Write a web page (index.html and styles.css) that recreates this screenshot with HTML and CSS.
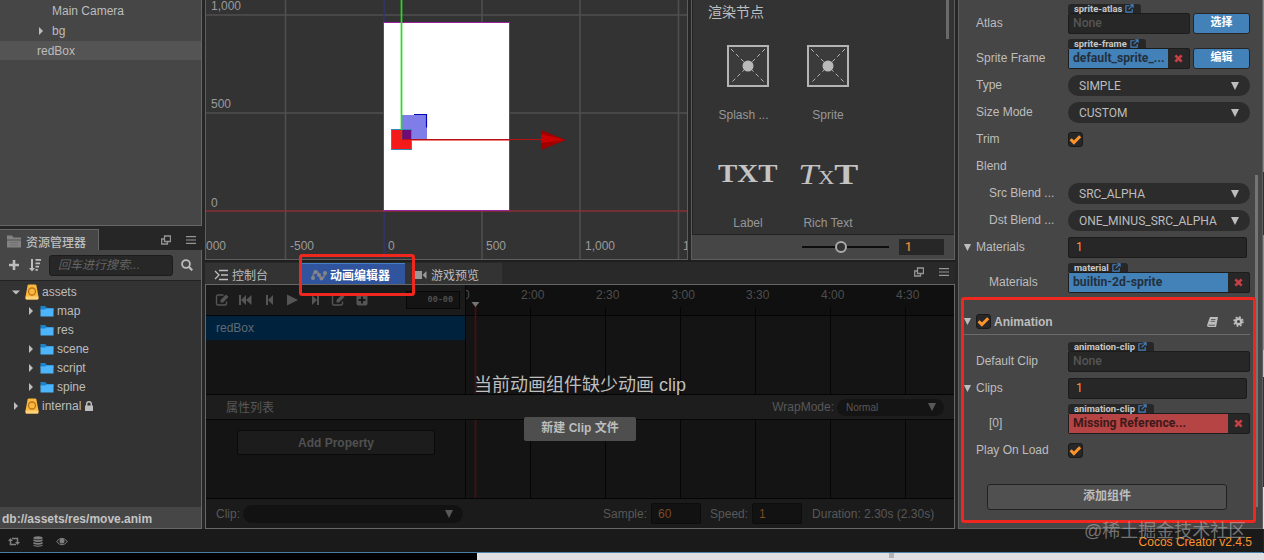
FILE: index.html
```html
<!DOCTYPE html>
<html lang="zh">
<head>
    <meta charset="UTF-8">
    <title>Cocos Creator</title>
    <link rel="stylesheet" href="styles.css">
</head>
<body>
    <svg class="defs">
        <symbol id="i-right" viewBox="0 0 10 10"><path d="M3 1l4 4-4 4z"/></symbol>
        <symbol id="i-down" viewBox="0 0 10 10"><path d="M1 3.400h8L5 7.400z"/></symbol>
        <symbol id="i-caret" viewBox="0 0 10 10"><path d="M1 1h8L5 9z"/></symbol>
        <symbol id="i-db" viewBox="0 0 14 16">
            <path d="M2.600 1.500Q3 .5 4 .5h6q1 0 1.400 1l2 10.500v2.500q0 1-1 1H1.600q-1 0-1-1V12z" fill="#fbb83c"/>
            <path d="M.6 12.500h12.800v2q0 1-1 1H1.600q-1 0-1-1z" fill="#ffd27a"/>
            <circle cx="7" cy="7.500" r="3.500" fill="none" stroke="#b8741c" stroke-width="1.300"/>
        </symbol>
        <symbol id="i-folder" viewBox="0 0 14 12">
            <path d="M.5 1h4.500l2 2h6.500v3H.5z" fill="#1f83c9"/>
            <path d="M.5 4.500h4.500l1.500-1h7V11.500H.5z" fill="#4db5fb"/>
        </symbol>
        <symbol id="i-pop" viewBox="0 0 10 10">
            <path d="M3.500 1h6v5.500h-6zM3 4H.7v5h5.800V7" fill="none" stroke="currentColor" stroke-width="1.300"/>
        </symbol>
        <symbol id="i-menu" viewBox="0 0 10 10"><path d="M0 1h10v1.200H0zM0 4.400h10v1.200H0zM0 7.800h10V9H0z"/></symbol>
        <symbol id="i-edit" viewBox="0 0 14 14">
            <path d="M8.500 2H3Q1.500 2 1.500 3.500v7Q1.500 12 3 12h7q1.500 0 1.500-1.500V8.500" fill="none" stroke="currentColor" stroke-width="1.400"/>
            <path d="M5.500 9.500V7l5.500-5.500 2.500 2.500L8 9.500z"/>
        </symbol>
        <symbol id="i-link" viewBox="0 0 10 10">
            <path d="M5 2H1v7h7V5.500M4 6l4.500-4.500M5.800 1H9v3.200" fill="none" stroke="currentColor" stroke-width="1.200"/>
        </symbol>
        <symbol id="i-check" viewBox="0 0 12 12"><path d="M1.500 5.800l3 3 5.800-5.800" fill="none" stroke="currentColor" stroke-width="2.800"/></symbol>
        <symbol id="i-x" viewBox="0 0 10 10"><path d="M1.500 1.500l7 7M8.500 1.500l-7 7" stroke="currentColor" stroke-width="3"/></symbol>
    </svg>

    <div class="editor">
        <div class="col-left">
            <div class="panel hierarchy">
                <div class="node"><span class="node-arrow"></span><span>Main Camera</span></div>
                <div class="node"><svg class="node-arrow"><use href="#i-right"/></svg><span>bg</span></div>
                <div class="node selected"><span>redBox</span></div>
            </div>
            <div class="assets">
                <div class="tabs">
                    <div class="tab assets-tab">
                        <svg class="ic14" viewBox="0 0 14 13"><path d="M0 1h5l1.500 2H14v10H0z" fill="#828282"/><path d="M0 5.500h14" stroke="#505050"/><path d="M3 8h8M3 10.500h8" stroke="#707070"/></svg>
                        资源管理器
                    </div>
                    <div class="tab-tools">
                        <svg class="ic10"><use href="#i-pop"/></svg>
                        <svg class="ic10"><use href="#i-menu"/></svg>
                    </div>
                </div>
                <div class="assets-body">
                    <div class="search-bar">
                        <svg class="ic-plus" viewBox="0 0 10 10"><path d="M3.700 0h2.600v3.700H10v2.600H6.300V10H3.700V6.300H0V3.700h3.700z"/></svg>
                        <svg class="ic-sort" viewBox="0 0 12 13"><path d="M2 0h2v9h2L3 12.500 0 9h2zM6.500 0H12v1.800H6.500zM6.500 3.400H11v1.800H6.500zM6.500 6.800H10v1.800H6.500zM6.500 10H8.800v1.800H6.500z"/></svg>
                        <div class="search-input">回车进行搜索...</div>
                        <svg class="ic-search" viewBox="0 0 12 12"><circle cx="5" cy="5" r="3.900" fill="none" stroke="currentColor" stroke-width="1.800"/><path d="M8 8l3.300 3.300" stroke="currentColor" stroke-width="2.200"/></svg>
                    </div>
                    <div class="tree">
                        <div class="item root"><svg class="arrow"><use href="#i-down"/></svg><svg class="ic-db"><use href="#i-db"/></svg>assets</div>
                        <div class="item"><svg class="arrow"><use href="#i-right"/></svg><svg class="ic-folder"><use href="#i-folder"/></svg>map</div>
                        <div class="item"><span class="arrow"></span><svg class="ic-folder"><use href="#i-folder"/></svg>res</div>
                        <div class="item"><svg class="arrow"><use href="#i-right"/></svg><svg class="ic-folder"><use href="#i-folder"/></svg>scene</div>
                        <div class="item"><svg class="arrow"><use href="#i-right"/></svg><svg class="ic-folder"><use href="#i-folder"/></svg>script</div>
                        <div class="item"><svg class="arrow"><use href="#i-right"/></svg><svg class="ic-folder"><use href="#i-folder"/></svg>spine</div>
                        <div class="item root"><svg class="arrow"><use href="#i-right"/></svg><svg class="ic-db"><use href="#i-db"/></svg>internal
                            <svg class="ic-lock" viewBox="0 0 8 10"><path d="M0 4.500h8V10H0z"/><path d="M1.700 5V3a2.300 2.300 0 0 1 4.600 0v2" fill="none" stroke="currentColor" stroke-width="1.400"/></svg>
                        </div>
                    </div>
                    <div class="path">db://assets/res/move.anim</div>
                </div>
            </div>
        </div>

        <div class="col-center">
            <div class="center-top">
                <div class="scene">
                    <svg width="481" height="259" viewBox="206 0 481 259">
                        <g stroke="#505050" stroke-width="1.500">
                            <path d="M206 15h481M206 113h481M285.500 0v259M482 0v259M580 0v259M678.500 0v259"/>
                        </g>
                        <path d="M384 0v259" stroke="#34347c" stroke-width="1.300"/>
                        <path d="M206 211h481" stroke="#8a2f32" stroke-width="1.500"/>
                        <rect x="383.500" y="22.500" width="126" height="188" fill="#fff" stroke="#97229c"/>
                        <rect x="402" y="115" width="25" height="25" fill="#7f7ee8"/>
                        <path d="M414 114.500h12.500v13" fill="none" stroke="#0505b8" stroke-width="1.200"/>
                        <rect x="391.500" y="129.500" width="20" height="20" fill="#f51a1a" stroke="#3289b5"/>
                        <rect x="402" y="130" width="9" height="9.500" fill="#700a78"/>
                        <path d="M401.500 0v130" stroke="#1ee01e" stroke-width="1.700"/>
                        <path d="M401.500 130v10" stroke="#8a5a10" stroke-width="1.500"/>
                        <path d="M411 140h98" stroke="#ee4f4f" stroke-width="1.500"/>
                        <path d="M402 139.500h139" stroke="#b31212"/>
                        <path d="M541 130l25 10-25 10z" fill="#a00000"/>
                        <path d="M541 134l24 6-24 3z" fill="#cc0000"/>
                        <g class="ruler-text">
                            <text x="211" y="10">1,000</text>
                            <text x="211" y="108">500</text>
                            <text x="211" y="207">0</text>
                            <text x="206" y="250">000</text>
                            <text x="290" y="250">-500</text>
                            <text x="388" y="250">0</text>
                            <text x="486" y="250">500</text>
                            <text x="585" y="250">1,000</text>
                            <text x="683" y="250">1</text>
                        </g>
                    </svg>
                </div>
                <div class="library">
                    <div class="lib-list">
                        <div class="lib-title">渲染节点</div>
                        <div class="lib-grid">
                            <div class="lib-item">
                                <svg class="sprite-icon" viewBox="0 0 42 42"><rect x="1" y="1" width="40" height="40" fill="#3b3b3b" stroke="#b4b4b4" stroke-width="2"/><path d="M4 4l34 34M38 4L4 38" stroke="#b4b4b4" stroke-dasharray="4 3"/><circle cx="21" cy="21" r="5.500" fill="#b9b9b9"/></svg>
                                <span>Splash ...</span>
                            </div>
                            <div class="lib-item">
                                <svg class="sprite-icon" viewBox="0 0 42 42"><rect x="1" y="1" width="40" height="40" fill="#3b3b3b" stroke="#b4b4b4" stroke-width="2"/><path d="M4 4l34 34M38 4L4 38" stroke="#b4b4b4" stroke-dasharray="4 3"/><circle cx="21" cy="21" r="5.500" fill="#b9b9b9"/></svg>
                                <span>Sprite</span>
                            </div>
                            <div class="lib-item"><div class="txt">TXT</div><span>Label</span></div>
                            <div class="lib-item"><div class="txt rich"><i>T</i><small>X</small><b>T</b></div><span>Rich Text</span></div>
                        </div>
                        <div class="lib-scroll"></div>
                    </div>
                    <div class="lib-footer">
                        <div class="slider"><div class="knob"></div></div>
                        <div class="lib-num">1</div>
                    </div>
                </div>
            </div>

            <div class="anim">
                <div class="tabs">
                    <div class="tab tab-console">
                        <svg class="ic-console" viewBox="0 0 15 12"><path d="M1 2l4 4-4 4" fill="none" stroke="currentColor" stroke-width="1.300"/><path d="M5 1.500h9M7 6h7M5 10.500h9" stroke="currentColor" stroke-width="1.700"/></svg>
                        控制台
                    </div>
                    <div class="tab tab-anim">
                        <svg class="ic-curve" viewBox="0 0 16 12"><path d="M1.500 9.500C3 1 5.500 0 8 6s5 3 6.500-3" fill="none" stroke="#77777a" stroke-width="2"/><g fill="#86868a"><circle cx="2" cy="9" r="2"/><circle cx="4.500" cy="3" r="2"/><circle cx="8" cy="6" r="2"/><circle cx="10.500" cy="9.500" r="2"/><circle cx="14" cy="4" r="2"/></g></svg>
                        动画编辑器
                    </div>
                    <div class="tab tab-preview">
                        <svg class="ic-cam" viewBox="0 0 14 10"><path d="M0 1h9v8H0zM9.500 5L13.500 1v8z" fill="#999"/></svg>
                        游戏预览
                    </div>
                    <div class="tab-tools">
                        <svg class="ic10"><use href="#i-pop"/></svg>
                        <svg class="ic10"><use href="#i-menu"/></svg>
                    </div>
                </div>
                <div class="anim-body">
                    <div class="anim-main">
                        <div class="anim-side">
                            <div class="anim-tools">
                                <svg class="ic14"><use href="#i-edit"/></svg>
                                <svg class="ic14" viewBox="0 0 14 14"><path d="M1 2h2v10H1zM8 2v10L3 7zM13.500 2v10L8 7z"/></svg>
                                <svg class="ic14" viewBox="0 0 14 14"><path d="M4 2h2v10H4zM11 2v10L6 7z"/></svg>
                                <svg class="ic14" viewBox="0 0 14 14"><path d="M2 1.500L13 7 2 12.500z"/></svg>
                                <svg class="ic14" viewBox="0 0 14 14"><path d="M9 2h2v10H9zM4 2v10l5-5z"/></svg>
                                <svg class="ic14"><use href="#i-edit"/></svg>
                                <svg class="ic14" viewBox="0 0 14 14"><path d="M3.500 1.500h7q2 0 2 2v7q0 2-2 2h-7q-2 0-2-2v-7q0-2 2-2z"/><path d="M7 3.500v7M3.500 7h7" stroke="#181818" stroke-width="2"/></svg>
                                <div class="frame-input">00-00</div>
                            </div>
                            <div class="anim-node">redBox</div>
                        </div>
                        <svg class="timeline" width="488" height="109" viewBox="466 285 488 109">
                            <rect x="466" y="285" width="488" height="30" fill="#101010"/>
                            <path d="M466 315.500h488M530.500 307v87M605.500 307v87M680.500 307v87M755.500 307v87M830.500 307v87M905.500 307v87" stroke="#050505"/>
                            <path d="M475.500 305v89" stroke="#5a0808" stroke-width="1.500"/>
                            <path d="M471.500 302h8l-4 5z" fill="#747474"/>
                            <g class="time-text">
                                <text x="463" y="299">0</text>
                                <text x="521" y="299">2:00</text>
                                <text x="596" y="299">2:30</text>
                                <text x="671.500" y="299">3:00</text>
                                <text x="746" y="299">3:30</text>
                                <text x="821" y="299">4:00</text>
                                <text x="896" y="299">4:30</text>
                            </g>
                        </svg>
                    </div>
                    <div class="prop-bar">
                        <span class="prop-title">属性列表</span>
                        <span>WrapMode:</span>
                        <div class="wrap-select">Normal<svg class="ic10"><use href="#i-caret"/></svg></div>
                    </div>
                    <div class="anim-main">
                        <div class="anim-side"><div class="add-prop">Add Property</div></div>
                        <svg class="timeline" width="488" height="78" viewBox="466 420 488 78">
                            <path d="M530.500 420v78M605.500 420v78M680.500 420v78M755.500 420v78M830.500 420v78M905.500 420v78" stroke="#050505"/>
                            <path d="M475.500 420v78" stroke="#5a0808" stroke-width="1.500"/>
                        </svg>
                    </div>
                    <div class="clip-bar">
                        <span>Clip:</span>
                        <div class="clip-select"><svg class="ic10"><use href="#i-caret"/></svg></div>
                        <span class="sample">Sample:</span><div class="num">60</div>
                        <span class="speed">Speed:</span><div class="num">1</div>
                        <span class="duration">Duration: 2.30s (2.30s)</span>
                    </div>
                    <div class="prompt">
                        <div class="prompt-text">当前动画组件缺少动画 clip</div>
                        <div class="prompt-button">新建 Clip 文件</div>
                    </div>
                </div>
            </div>
        </div>

        <div class="inspector">
            <div class="row tagged">
                <label>Atlas</label>
                <div class="field short"><div class="tag">sprite-atlas<svg><use href="#i-link"/></svg></div><div class="box none">None</div></div>
                <div class="blue-button">选择</div>
            </div>
            <div class="row tagged">
                <label>Sprite Frame</label>
                <div class="field short"><div class="tag">sprite-frame<svg><use href="#i-link"/></svg></div><div class="box"><div class="ref">default_sprite_...</div><svg class="del"><use href="#i-x"/></svg></div></div>
                <div class="blue-button">编辑</div>
            </div>
            <div class="row"><label>Type</label><div class="select">SIMPLE<svg class="ic10"><use href="#i-caret"/></svg></div></div>
            <div class="row"><label>Size Mode</label><div class="select">CUSTOM<svg class="ic10"><use href="#i-caret"/></svg></div></div>
            <div class="row"><label>Trim</label><div class="check"><svg><use href="#i-check"/></svg></div></div>
            <div class="row"><label>Blend</label></div>
            <div class="row sub"><label>Src Blend ...</label><div class="select">SRC_ALPHA<svg class="ic10"><use href="#i-caret"/></svg></div></div>
            <div class="row sub"><label>Dst Blend ...</label><div class="select">ONE_MINUS_SRC_ALPHA<svg class="ic10"><use href="#i-caret"/></svg></div></div>
            <div class="row fold"><svg class="fold-icon"><use href="#i-caret"/></svg><label>Materials</label><div class="input">1</div></div>
            <div class="row tagged sub">
                <label>Materials</label>
                <div class="field"><div class="tag">material<svg><use href="#i-link"/></svg></div><div class="box"><div class="ref">builtin-2d-sprite</div><svg class="del"><use href="#i-x"/></svg></div></div>
            </div>
            <div class="comp-header">
                <svg class="fold-icon"><use href="#i-caret"/></svg>
                <div class="check"><svg><use href="#i-check"/></svg></div>
                <span class="comp-name">Animation</span>
                <svg class="ic-book" viewBox="0 0 11 10"><path d="M3 0h8L9 10H1.500Q-.3 9.800.3 7.500z"/><path d="M4 2.500h4.500M3.600 4.300h4.500M1.500 8.200h6.500" stroke="#464646" stroke-width=".8"/></svg>
                <svg class="ic-gear" viewBox="0 0 12 12"><circle cx="6" cy="6" r="3" fill="none" stroke="currentColor" stroke-width="2.600"/><circle cx="6" cy="6" r="4.800" fill="none" stroke="currentColor" stroke-width="1.800" stroke-dasharray="2 1.770"/></svg>
            </div>
            <div class="row tagged">
                <label>Default Clip</label>
                <div class="field"><div class="tag">animation-clip<svg><use href="#i-link"/></svg></div><div class="box none">None</div></div>
            </div>
            <div class="row fold"><svg class="fold-icon"><use href="#i-caret"/></svg><label>Clips</label><div class="input">1</div></div>
            <div class="row tagged sub">
                <label>[0]</label>
                <div class="field"><div class="tag">animation-clip<svg><use href="#i-link"/></svg></div><div class="box"><div class="ref missing">Missing Reference...</div><svg class="del"><use href="#i-x"/></svg></div></div>
            </div>
            <div class="row"><label>Play On Load</label><div class="check"><svg><use href="#i-check"/></svg></div></div>
            <div class="add-comp">添加组件</div>
            <div class="inspector-scroll"></div>
        </div>
        <div class="screen-edge"></div>
    </div>

    <div class="status">
        <svg viewBox="0 0 12 10"><path d="M2.500 4v4H8M9.500 6V2H4" fill="none" stroke="currentColor" stroke-width="1.500"/><path d="M0 4.500l2.500-3 2.500 3zM7 5.500l2.500 3 2.500-3z"/></svg>
        <svg viewBox="0 0 12 12"><ellipse cx="6" cy="2" rx="5" ry="1.800"/><path d="M1 3.500q5 2 10 0v2q-5 2-10 0zM1 6.500q5 2 10 0v2q-5 2-10 0zM1 9.500q5 2 10 0v1q-5 2.500-10 0z"/></svg>
        <svg viewBox="0 0 12 10"><path d="M.6 5Q6-1.500 11.400 5 6 11.500.6 5z" fill="none" stroke="currentColor"/><circle cx="6" cy="4.600" r="2.500"/></svg>
        <span class="version">Cocos Creator v2.4.5</span>
    </div>
    <div class="desktop"><div class="desktop-dark"></div><div class="desktop-mark"></div></div>

    <div class="mark mark-tab"></div>
    <div class="mark mark-comp"></div>
    <div class="watermark">@稀土掘金技术社区</div>
</body>
</html>
```

FILE: styles.css
```css
* {
    box-sizing: border-box;
}
body {
    margin: 0;
    width: 1264px;
    height: 560px;
    overflow: hidden;
    position: relative;
    background: #262626;
    color: #bdbdbd;
    font-family: "Liberation Sans", "Noto Sans CJK SC", sans-serif;
    font-size: 12px;
    display: flex;
    flex-direction: column;
}
svg {
    display: block;
    flex: none;
    fill: currentColor;
}
.defs {
    position: absolute;
    width: 0;
    height: 0;
}
.ic10 {
    width: 10px;
    height: 10px;
}
.ic14 {
    width: 14px;
    height: 14px;
}
.editor {
    display: flex;
    height: 529px;
}

/* left column */
.col-left {
    width: 202px;
    margin-right: 3px;
    display: flex;
    flex-direction: column;
    gap: 3px;
}
.hierarchy {
    height: 226px;
    background: #464646;
    border-right: 1px solid #666;
    border-bottom: 1px solid #666;
    padding-top: 1px;
}
.node {
    height: 20px;
    padding-left: 37px;
    display: flex;
    align-items: center;
}
.node-arrow {
    width: 10px;
    height: 10px;
    margin-right: 6px;
    margin-left: -1px;
}
.node.selected {
    background: #545454;
    height: 19px;
}
.assets {
    height: 300px;
    display: flex;
    flex-direction: column;
}
.tabs {
    display: flex;
    align-items: flex-end;
    background: #262626;
    position: relative;
}
.assets .tabs {
    height: 21px;
}
.tab {
    display: flex;
    align-items: center;
    gap: 5px;
    height: 21px;
}
.assets-tab {
    width: 99px;
    padding-left: 7px;
    background: #464646;
    border-top: 1px solid #666;
    border-right: 1px solid #666;
    font-weight: 500;
    padding-top: 2px;
}
.tab-tools {
    margin-left: auto;
    align-self: center;
    display: flex;
    gap: 15px;
    padding-right: 6px;
    color: #959595;
}
.assets-body {
    flex: 1;
    display: flex;
    flex-direction: column;
    border-right: 1px solid #666;
    border-bottom: 1px solid #666;
    background: #333;
}
.search-bar {
    height: 31px;
    display: flex;
    align-items: center;
    background: #464646;
    border-bottom: 1px solid #222;
    padding-left: 9px;
}
.ic-plus {
    width: 10px;
    height: 10px;
}
.ic-sort {
    width: 12px;
    height: 13px;
    margin-left: 10px;
}
.search-input {
    width: 124px;
    height: 21px;
    margin: 0 8px;
    padding-left: 8px;
    line-height: 19px;
    background: #272727;
    border: 1px solid #1c1c1c;
    border-radius: 3px;
    color: #646464;
    font-style: italic;
}
.ic-search {
    width: 12px;
    height: 12px;
}
.tree {
    flex: 1;
    padding-top: 1px;
}
.item {
    height: 19px;
    display: flex;
    align-items: center;
    padding-left: 26px;
}
.item.root {
    padding-left: 11px;
}
.arrow {
    width: 10px;
    height: 10px;
    margin-right: 4px;
}
.ic-db {
    width: 14px;
    height: 16px;
    margin-right: 3px;
}
.ic-folder {
    width: 14px;
    height: 12px;
    margin-right: 3px;
}
.ic-lock {
    width: 8px;
    height: 10px;
    margin-left: 4px;
}
.path {
    height: 21px;
    line-height: 24px;
    padding-left: 2px;
    background: #464646;
    font-weight: bold;
    color: #c4c4c4;
}

/* scene and node library */
.col-center {
    width: 750px;
    margin-right: 3px;
    display: flex;
    flex-direction: column;
}
.center-top {
    height: 260px;
    display: flex;
    justify-content: space-between;
}
.scene {
    width: 483px;
    background: #333;
    border: 1px solid #5e5e5e;
    border-top: none;
    overflow: hidden;
}
.ruler-text {
    fill: #9a9a9a;
    font-size: 12px;
}
.library {
    width: 264px;
    border: 1px solid #5e5e5e;
    border-top: none;
    display: flex;
    flex-direction: column;
}
.lib-list {
    height: 234px;
    background: #333;
    position: relative;
    border-left: 1px solid #222;
}
.lib-title {
    padding: 3px 0 0 15px;
    font-size: 14px;
    line-height: 18px;
}
.lib-grid {
    display: grid;
    grid-template-columns: 80px 80px;
    grid-auto-rows: 108px;
    padding: 14px 0 0 15px;
    color: #979797;
}
.lib-item {
    display: flex;
    flex-direction: column;
    align-items: center;
    text-align: center;
}
.lib-item span {
    margin-top: auto;
    margin-bottom: 21px;
    line-height: 14px;
}
.lib-item:first-child span {
    margin-right: 9px;
}
.sprite-icon {
    width: 42px;
    height: 42px;
    margin-top: 10px;
}
.txt {
    height: 42px;
    margin-top: 10px;
    font: bold 26px/42px "Liberation Serif", serif;
    color: #c4c4c4;
    transform: scaleX(1.11);
}
.txt.rich {
    transform: scaleX(1.24);
}
.txt.rich i {
    font-weight: normal;
    font-size: 29px;
}
.txt.rich small {
    font-weight: normal;
    font-size: 18px;
}
.txt.rich b {
    font-size: 29px;
}
.lib-scroll {
    position: absolute;
    top: 0;
    right: 5px;
    width: 3px;
    height: 39px;
    background: #6a6a6a;
}
.lib-footer {
    height: 25px;
    background: #464646;
    border-top: 1px solid #222;
    display: flex;
    align-items: center;
    justify-content: flex-end;
    padding-right: 10px;
}
.slider {
    width: 87px;
    height: 2px;
    background: #0e0e0e;
    margin-right: 10px;
}
.knob {
    width: 12px;
    height: 12px;
    margin: -5px 0 0 33px;
    border: 2px solid #aaa;
    border-radius: 50%;
    background: #333;
}
.lib-num {
    width: 45px;
    height: 16px;
    padding-left: 6px;
    background: #272727;
    color: #f08536;
    font-family: Roboto, sans-serif;
    font-weight: 500;
    line-height: 16px;
}

/* animation editor */
.anim {
    height: 269px;
    display: flex;
    flex-direction: column;
}
.anim .tabs {
    height: 24px;
    background: #292929;
    border-top: 2px solid #1f1f1f;
}
.tab-console {
    width: 94px;
    padding: 2px 0 0 9px;
    background: #333;
    gap: 3px;
}
.tab-anim {
    width: 103px;
    margin-left: 3px;
    padding: 1px 0 0 9px;
    gap: 3px;
    background: #31549f;
    border-top: 1px solid #4380c4;
    color: #fff;
    font-weight: bold;
}
.tab-preview {
    width: 97px;
    padding: 2px 0 0 8px;
    background: #333;
    gap: 4px;
}
.anim .tab-tools {
    margin-bottom: 3px;
}
.ic-console {
    width: 15px;
    height: 12px;
}
.ic-curve {
    width: 16px;
    height: 12px;
}
.ic-cam {
    width: 14px;
    height: 10px;
}
.anim-body {
    height: 245px;
    border: 1px solid #666;
    background: #141414;
    color: #585858;
    position: relative;
}
.anim-main {
    display: flex;
}
.anim-side {
    width: 260px;
    border-right: 1px solid #050505;
}
.anim-tools {
    height: 31px;
    background: #1b1b1b;
    border-bottom: 1px solid #050505;
    display: flex;
    align-items: center;
    gap: 9.300px;
    padding-left: 9px;
    color: #555;
}
.frame-input {
    width: 54px;
    height: 18px;
    margin-left: 28px;
    padding-right: 6px;
    text-align: right;
    line-height: 16px;
    font-family: "Liberation Mono", monospace;
    font-size: 8.500px;
    font-weight: bold;
    border: 1px solid #070707;
    background: #141414;
    color: #505050;
}
.anim-node {
    height: 24px;
    line-height: 24px;
    padding-left: 10px;
    background: #00223d;
    color: #5f6a72;
}
.time-text {
    fill: #4e4e4e;
    font-size: 12px;
}
.prop-bar {
    height: 26px;
    display: flex;
    align-items: center;
    background: #1d1d1d;
    border-top: 1px solid #050505;
    border-bottom: 1px solid #050505;
    padding-left: 20px;
    padding-right: 10px;
}
.prop-title {
    margin-right: auto;
    padding-bottom: 2px;
}
.wrap-select {
    width: 107px;
    height: 17px;
    margin-left: 3px;
    padding: 0 7px 0 9px;
    display: flex;
    align-items: center;
    justify-content: space-between;
    border-radius: 9px;
    background: #141414;
    font-size: 10px;
}
.add-prop {
    width: 198px;
    height: 25px;
    margin: 10px 0 0 31px;
    line-height: 24px;
    text-align: center;
    font-weight: bold;
    background: #1c1c1c;
    border: 1px solid #0a0a0a;
    border-radius: 2px;
    color: #505050;
    font-family: "Liberation Sans", sans-serif;
    font-size: 12px;
}
.clip-bar {
    height: 30px;
    display: flex;
    align-items: center;
    background: #1b1b1b;
    border-top: 1px solid #050505;
    padding-left: 10px;
}
.clip-select {
    width: 220px;
    height: 18px;
    margin-left: 3px;
    padding-right: 9px;
    display: flex;
    align-items: center;
    justify-content: flex-end;
    background: #121212;
    border-radius: 9px;
}
.sample {
    margin-left: 140px;
}
.num {
    width: 50px;
    height: 21px;
    margin-left: 4px;
    padding-left: 6px;
    line-height: 20px;
    background: #121212;
    border: 1px solid #0d0d0d;
    border-radius: 2px;
    color: #7d4a22;
}
.speed {
    margin-left: 9px;
}
.duration {
    margin-left: 10px;
}
.prompt {
    position: absolute;
    left: 0;
    right: 0;
    top: 87px;
    display: flex;
    flex-direction: column;
    align-items: center;
}
.prompt-text {
    font-size: 18px;
    line-height: 26px;
    color: #bfbfbf;
}
.prompt-button {
    width: 112px;
    height: 24px;
    margin-top: 19px;
    line-height: 23px;
    text-align: center;
    font-weight: bold;
    color: #bdbdbd;
    background: #4e4e4e;
    border-radius: 2px;
}

/* inspector */
.inspector {
    width: 305px;
    background: #464646;
    border: 1px solid #5f5f5f;
    border-top: none;
    padding-top: 2px;
    position: relative;
}
.row {
    height: 27px;
    display: flex;
    align-items: center;
    padding-left: 17px;
}
.row label {
    width: 92px;
    padding-bottom: 2px;
    white-space: nowrap;
}
.row.sub {
    padding-left: 30px;
}
.row.sub label {
    width: 79px;
}
.row.fold {
    padding-left: 4px;
}
.row.fold label {
    margin-left: 4px;
}
.fold-icon {
    width: 9px;
    height: 9px;
}
.row.tagged {
    height: 35px;
    align-items: flex-start;
}
.row.tagged label {
    padding-top: 14px;
}
.field {
    width: 182px;
    padding-top: 2px;
}
.field.short {
    width: 122px;
}
.tag {
    width: fit-content;
    height: 9px;
    display: flex;
    align-items: center;
    gap: 3px;
    padding: 0 7px 0 6px;
    background: #272727;
    border-radius: 3px 3px 0 0;
    font: bold 9.400px/9px Roboto, sans-serif;
    color: #c8c8c8;
}
.tag svg {
    width: 9px;
    height: 9px;
    color: #4684c4;
}
.box {
    height: 21px;
    display: flex;
    border: 1px solid #1c1c1c;
    border-radius: 2px;
    background: #272727;
    font: bold 12.200px/19px Roboto, sans-serif;
}
.box.none {
    padding-left: 4px;
    color: #555;
    font-weight: 500;
}
.ref {
    flex: 1;
    padding-left: 4px;
    background: #4381b9;
    color: #24303c;
    white-space: nowrap;
}
.ref.missing {
    background: #b74444;
    color: #3c1a1a;
}
.del {
    width: 9px;
    height: 9px;
    margin: 5px 6px;
    color: #c64046;
}
.blue-button {
    width: 57px;
    height: 21px;
    margin: 11px 0 0 3px;
    line-height: 17px;
    text-align: center;
    font-size: 11px;
    font-weight: bold;
    color: #fff;
    background: #4381b9;
    border: 1px solid #262626;
    border-radius: 3px;
}
.select {
    width: 182px;
    height: 21px;
    display: flex;
    align-items: center;
    justify-content: space-between;
    padding: 0 10px 0 11px;
    background: #2c2c2c;
    border-radius: 11px;
    font-family: Roboto, sans-serif;
}
.check {
    width: 15px;
    height: 15px;
    background: #272727;
    border: 1px solid #1a1a1a;
    border-radius: 3px;
    color: #fd942b;
}
.check svg {
    width: 13px;
    height: 13px;
}
.input {
    width: 179px;
    height: 21px;
    padding-left: 7px;
    line-height: 19px;
    background: #272727;
    border: 1px solid #1b1b1b;
    border-radius: 2px;
    color: #fd942b;
    font-family: Roboto, sans-serif;
}
.comp-header {
    height: 28px;
    margin: 11px 12px 5px 4px;
    display: flex;
    align-items: center;
    padding-top: 2px;
    border-bottom: 1px solid #6c6c6c;
}
.comp-header .check {
    margin: 0 3px 0 4px;
}
.comp-name {
    font-weight: bold;
    margin-right: auto;
}
.ic-book {
    width: 11px;
    height: 10px;
    margin-right: 15px;
}
.ic-gear {
    width: 11px;
    height: 11px;
    margin-right: 6px;
}
.add-comp {
    width: 240px;
    height: 26px;
    margin: 20px 0 0 28px;
    line-height: 23px;
    text-align: center;
    font-weight: bold;
    background: #505050;
    border: 1px solid #222;
    border-radius: 3px;
}
.inspector-scroll {
    position: absolute;
    right: 4px;
    top: 175px;
    width: 3px;
    height: 332px;
    background: #757575;
}
.screen-edge {
    width: 1px;
    background: linear-gradient(#3f9bdc 0 172px, #0b3a66 172px 235px, #4aa3e0 235px 350px, #9ad0f2 350px 377px, #0c3d6c 377px 487px, #cfe3f2 487px);
}

/* status bar */
.status {
    height: 24px;
    width: 1263px;
    display: flex;
    align-items: center;
    gap: 12px;
    padding: 2px 11px 0 8px;
    background: #1a1a1a;
    border-bottom: 1px solid #4b7fa6;
    color: #808080;
}
.status svg {
    width: 12px;
    height: 11px;
}
.version {
    margin-left: auto;
    color: #fd942b;
}
.desktop {
    height: 7px;
    display: flex;
    background: #e0e0e4;
}
.desktop-dark {
    width: 477px;
    height: 7px;
    background: #000;
}
.desktop-mark {
    width: 5px;
    height: 5px;
    margin-left: 412px;
    background: #b4b4b8;
}

/* annotations */
.mark {
    position: absolute;
    border: 3px solid #ee281e;
    border-radius: 3px;
}
.mark-tab {
    left: 299px;
    top: 254px;
    width: 116px;
    height: 42px;
}
.mark-comp {
    left: 961px;
    top: 297px;
    width: 295px;
    height: 226px;
}
.watermark {
    position: absolute;
    left: 1084px;
    top: 518px;
    font-size: 18px;
    line-height: 26px;
    white-space: nowrap;
    color: rgba(175, 175, 175, 0.6);
}
```
